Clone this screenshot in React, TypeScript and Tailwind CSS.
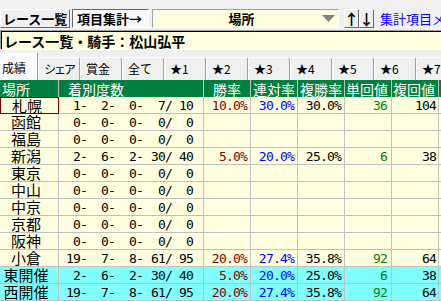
import React from 'react';

type Row = {
  name: string;
  counts: number[];
  win?: string;
  ren?: string;
  fuku?: string;
  tan?: string;
  fukuV?: string;
  cyan?: boolean;
  selected?: boolean;
};

const zero = [0, 0, 0, 0, 0];

const rows: Row[] = [
  { name: '札幌', counts: [1, 2, 0, 7, 10], win: '10.0%', ren: '30.0%', fuku: '30.0%', tan: '36', fukuV: '104', selected: true },
  { name: '函館', counts: zero },
  { name: '福島', counts: zero },
  { name: '新潟', counts: [2, 6, 2, 30, 40], win: '5.0%', ren: '20.0%', fuku: '25.0%', tan: '6', fukuV: '38' },
  { name: '東京', counts: zero },
  { name: '中山', counts: zero },
  { name: '中京', counts: zero },
  { name: '京都', counts: zero },
  { name: '阪神', counts: zero },
  { name: '小倉', counts: [19, 7, 8, 61, 95], win: '20.0%', ren: '27.4%', fuku: '35.8%', tan: '92', fukuV: '64' },
  { name: '東開催', counts: [2, 6, 2, 30, 40], win: '5.0%', ren: '20.0%', fuku: '25.0%', tan: '6', fukuV: '38', cyan: true },
  { name: '西開催', counts: [19, 7, 8, 61, 95], win: '20.0%', ren: '27.4%', fuku: '35.8%', tan: '92', fukuV: '64', cyan: true },
];

const tabs = [
  { label: 'シェア', cls: 'tracking-[-2px]' },
  { label: '賞金', cls: '' },
  { label: '全て', cls: '' },
  { label: '★1', cls: '' },
  { label: '★2', cls: '' },
  { label: '★3', cls: '' },
  { label: '★4', cls: '' },
  { label: '★5', cls: '' },
  { label: '★6', cls: '' },
  { label: '★7', cls: '' },
];

const mono = "font-['DejaVu_Sans_Mono',monospace] text-[13px] tracking-[-0.8px]";

function DataRow({ r }: { r: Row }) {
  const bg = r.cyan ? 'bg-[#80ffff]' : 'bg-[#ffffe0]';
  const cell = 'shrink-0 h-full border-r border-b border-[#c0c0c0] flex items-center justify-end';
  return (
    <div className={`flex h-[17px] ${bg}`}>
      <div
        className={`w-[59px] shrink-0 h-full border-r border-b ${
          r.selected ? 'border-l border-t border-[#800000]' : 'border-[#c0c0c0]'
        }`}
      >
        <div className="w-[52px] h-full text-center text-[15px] leading-[15px] text-black">{r.name}</div>
      </div>
      <div className={`w-[145px] shrink-0 h-full flex items-center border-r border-b border-[#c0c0c0] ${mono}`}>
        <span className="w-[28px] text-right">{r.counts[0]}-</span>
        <span className="w-[28px] text-right">{r.counts[1]}-</span>
        <span className="w-[28px] text-right">{r.counts[2]}-</span>
        <span className="w-[29px] text-right">{r.counts[3]}/</span>
        <span className="w-[21px] text-right">{r.counts[4]}</span>
      </div>
      <div className={`w-[47px] pr-[3px] ${cell} ${mono} text-[#800000]`}>{r.win}</div>
      <div className={`w-[47px] pr-[3px] ${cell} ${mono} text-[#0000ff]`}>{r.ren}</div>
      <div className={`w-[47px] pr-[3px] ${cell} ${mono} text-black`}>{r.fuku}</div>
      <div className={`w-[47px] pr-[4px] ${cell} ${mono} text-[#008000]`}>{r.tan}</div>
      <div className={`w-[47px] pr-[2px] ${cell} ${mono} text-black`}>{r.fukuV}</div>
      <div className="flex-1 h-full border-b border-[#c0c0c0]" />
    </div>
  );
}

export default function App() {
  return (
    <div className="w-[441px] h-[301px] overflow-hidden bg-[#f0f0f0] font-['Noto_Sans_CJK_JP',sans-serif] text-black leading-none whitespace-nowrap select-none">
      {/* Toolbar */}
      <div className="h-[30px] flex items-start pt-[9px]">
        <div className="w-[70px] shrink-0 h-[19px] flex items-center pl-[2px] overflow-hidden text-[13px] font-bold border border-t-white border-l-white border-b-[#696969] border-r-[#696969] bg-[#f0f0f0]">
          レース一覧
        </div>
        <div className="ml-[2px] w-[77px] shrink-0 h-[19px] flex items-center pl-[4px] overflow-hidden text-[13px] font-bold border border-t-[#696969] border-l-[#696969] border-b-white border-r-white bg-[#f9f9f9]">
          項目集計→
        </div>
        <div className="ml-[3px] w-[187px] shrink-0 h-[19px] relative flex items-center justify-center text-[13px] font-bold bg-[#ffffe0] border border-t-[#a0a0a0] border-l-[#a0a0a0] border-b-white border-r-white">
          <span className="pr-[8px]">場所</span>
          <svg className="absolute right-[3px] top-[5px]" width="13" height="7" viewBox="0 0 13 7">
            <polygon points="0,0 13,0 6.5,7" fill="#808080" />
          </svg>
        </div>
        <div className="ml-[5px] w-[15px] shrink-0 h-[19px] flex items-center justify-center text-[15px] font-bold border border-t-white border-l-white border-b-[#696969] border-r-[#696969]">
          ↑
        </div>
        <div className="w-[15px] shrink-0 h-[19px] flex items-center justify-center text-[15px] font-bold border border-t-white border-l-white border-b-[#696969] border-r-[#696969]">
          ↓
        </div>
        <div className="ml-[6px] h-[19px] flex items-center text-[13px] text-[#0000ff]">
          集計項目メニュー
        </div>
      </div>

      {/* Title */}
      <div className="h-[20px] border-t border-l border-t-[#a0a0a0] border-l-[#a0a0a0] border-b border-b-white">
        <div className="h-full flex items-center pl-[2px] bg-[#ffffe0] border-t border-l border-black text-[14px] font-bold">
          レース一覧・騎手：松山弘平
        </div>
      </div>

      {/* Tabs */}
      <div className="h-[30px] flex items-end pt-[3px]">
        <div className="w-[38px] shrink-0 h-[27px] flex items-center pl-[2px] pt-[3px] text-[12px] bg-[#fcfcfc] border-r border-[#a0a0a0]">
          成績
        </div>
        {tabs.map((t) => (
          <div
            key={t.label}
            className={`w-[42px] shrink-0 h-[23px] flex items-center pl-[5px] text-[12px] bg-[#f0f0f0] border-t border-l border-white border-r border-r-[#a0a0a0] rounded-t-[2px] ${t.cls}`}
          >
            {t.label}
          </div>
        ))}
      </div>

      {/* Header */}
      <div className="flex h-[17px] bg-[#008040] text-white text-[14px]">
        <div className="w-[59px] shrink-0 h-full flex items-center pl-[2px] border-r border-[#c0c0c0]">場所</div>
        <div className="w-[145px] shrink-0 h-full flex items-center pl-[9px] border-r border-[#c0c0c0]">着別度数</div>
        <div className="w-[47px] shrink-0 h-full flex items-center pl-[9px] border-r border-[#c0c0c0]">勝率</div>
        <div className="w-[47px] shrink-0 h-full flex items-center pl-[2px] border-r border-[#c0c0c0]">連対率</div>
        <div className="w-[47px] shrink-0 h-full flex items-center pl-[2px] border-r border-[#c0c0c0]">複勝率</div>
        <div className="w-[47px] shrink-0 h-full flex items-center pl-[1px] border-r border-[#c0c0c0]">単回値</div>
        <div className="w-[47px] shrink-0 h-full flex items-center pl-[1px] border-r border-[#c0c0c0]">複回値</div>
        <div className="flex-1" />
      </div>

      {/* Rows */}
      {rows.map((r) => (
        <DataRow key={r.name} r={r} />
      ))}
    </div>
  );
}
